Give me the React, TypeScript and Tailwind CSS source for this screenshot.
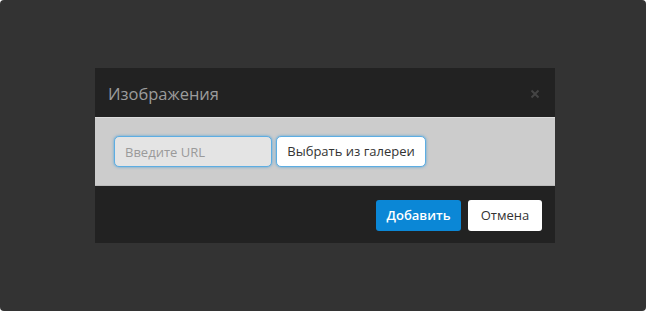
const App = () => {
  return (
    <div className="h-[311px] w-[646px] rounded-[4px] bg-[#333333] pl-[95px] pt-[68px] font-['Open_Sans',sans-serif]">
      <div className="w-[460px] bg-[#222222]">
        <div className="flex h-[49px] items-center justify-between pl-[13px] pr-[15px]">
          <h3 className="mt-[4px] text-[16.5px] leading-none text-[#9c9c9c]">Изображения</h3>
          <svg width="10" height="10" viewBox="0 0 10 10" className="mt-[2px]">
            <path d="M1.5 1.5 L8.5 8.5 M8.5 1.5 L1.5 8.5" stroke="#444444" strokeWidth="2" />
          </svg>
        </div>
        <div className="flex gap-[4px] border-y border-t-[#dddddd] border-b-[#bbbbbb] bg-[#cccccc] pb-[18px] pl-[19px] pt-[18px]">
          <input
            className="h-[31px] w-[158px] rounded-[5px] border border-[#5dade2] bg-[#e4e4e4] px-[10px] text-[13px] text-[#555] shadow-[0_0_3px_rgba(52,152,219,0.8)] outline-none placeholder:text-[#9a9a9a]"
            placeholder="Введите URL"
          />
          <button className="h-[31px] w-[150px] rounded-[5px] border border-[#5dade2] bg-white text-[13px] text-[#333333] shadow-[0_0_3px_rgba(52,152,219,0.8)]">
            Выбрать из галереи
          </button>
        </div>
        <div className="flex h-[57px] items-start justify-end gap-[7px] pr-[13px] pt-[14px]">
          <button className="h-[31px] w-[85px] rounded-[3px] bg-[#0b87d6] text-[13px] font-semibold text-white">
            Добавить
          </button>
          <button className="h-[31px] w-[74px] rounded-[3px] bg-white text-[13px] text-[#333333]">Отмена</button>
        </div>
      </div>
    </div>
  )
}

export default App
